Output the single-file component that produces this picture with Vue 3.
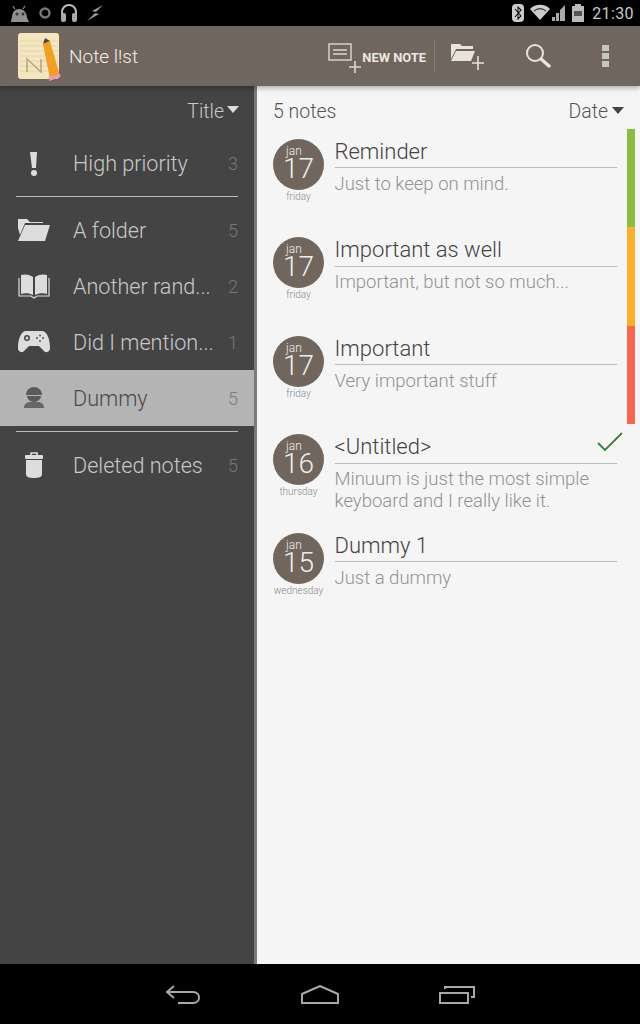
<script setup>
const cats = [
  { name: 'A folder', count: 5, icon: 'folder' },
  { name: 'Another rand...', count: 2, icon: 'book' },
  { name: 'Did I mention...', count: 1, icon: 'game' },
  { name: 'Dummy', count: 5, icon: 'user', active: true },
]
const notes = [
  { m: 'jan', d: 17, w: 'friday', t: 'Reminder', b: ['Just to keep on mind.'], c: '#8bbd45' },
  { m: 'jan', d: 17, w: 'friday', t: 'Important as well', b: ['Important, but not so much...'], c: '#fbb02d' },
  { m: 'jan', d: 17, w: 'friday', t: 'Important', b: ['Very important stuff'], c: '#f7664f' },
  { m: 'jan', d: 16, w: 'thursday', t: '<Untitled>', b: ['Minuum is just the most simple', 'keyboard and I really like it.'], check: true },
  { m: 'jan', d: 15, w: 'wednesday', t: 'Dummy 1', b: ['Just a dummy'] },
]
</script>

<template>
  <div class="screen">
    <header class="status">
      <div class="status-left">
        <svg width="22" height="20" viewBox="0 0 22 20"><path d="M3 15c0-6 3-9 7-9s8 3 8 9c1 2 2 3 2 4H2c0-1 0-3 1-4z" fill="#8f8f8f"/><path d="M6 6 4 3M14 6l2-3" stroke="#8f8f8f" stroke-width="1.2"/><circle cx="8" cy="11" r="1.5" fill="#333"/><circle cx="14" cy="11" r="1.5" fill="#333"/></svg>
        <svg width="14" height="14" viewBox="0 0 14 14"><circle cx="7" cy="7" r="4.5" fill="none" stroke="#777" stroke-width="2.4"/></svg>
        <svg width="20" height="20" viewBox="0 0 20 20"><path d="M3 12V9a7 7 0 0 1 14 0v3" fill="none" stroke="#bbb" stroke-width="2"/><rect x="2" y="10" width="5" height="9" rx="2" fill="#aaa"/><rect x="13" y="10" width="5" height="9" rx="2" fill="#aaa"/></svg>
        <svg width="18" height="18" viewBox="0 0 18 18"><path d="M17 1 6 7l4 1-9 9 12-7-4-1z" fill="#999"/></svg>
      </div>
      <div class="status-right">
        <svg width="12" height="18" viewBox="0 0 12 18"><rect width="12" height="18" rx="4" fill="#ccc"/><path d="m3 5 6 7-3 3V3l3 3-6 7" fill="none" stroke="#111" stroke-width="1.1"/></svg>
        <svg width="36" height="18" viewBox="0 0 36 18"><path d="M0 5a14 14 0 0 1 20 0l-10 11z" fill="#ccc"/><path d="M4 7a9 9 0 0 1 12 0" fill="none" stroke="#111"/><path d="M22 17h3v-4h-3zM26 17h3V9h-3zM30 17h5V1l-5 5z" fill="#aaa"/></svg>
        <svg class="battery" width="12" height="18" viewBox="0 0 12 18"><path d="M3 0h6v2h3v16H0V2h3z" fill="#bbb"/><rect x="2" y="7" width="8" height="5" fill="#555"/></svg>
        <span class="clock">21:30</span>
      </div>
    </header>

    <div class="appbar">
      <svg class="logo" width="44" height="50" viewBox="0 0 44 50">
        <rect x="0" y="1" width="41" height="46" rx="3" fill="#f4e7c0"/>
        <path d="M2 9h38M2 14h38M2 19h38M2 24h38M2 29h38M2 34h38M2 39h38" stroke="#dfd0a8" stroke-width=".8"/>
        <path d="M9 40V27l14 13V27" fill="none" stroke="#b8a684" stroke-width="1.6"/>
        <path d="m25 12 7-3 10 35-10 3z" fill="#f1a025"/><path d="m25 12 2-6 5 3z" fill="#5a4630"/><path d="m30.500 45 11.500-3 .5 3-11 4z" fill="#ec9ab0"/>
      </svg>
      <span class="app-title">Note l!st</span>
      <div class="actions">
        <button class="new-note">
          <svg width="34" height="30" viewBox="0 0 34 30"><rect x="1" y="1" width="22" height="16" fill="none" stroke="#ddd8d2" stroke-width="1.4"/><path d="M5 7h14M5 11h14" stroke="#ddd8d2" stroke-width="1.4"/><path d="M27 18v12M21 24h12" stroke="#ddd8d2" stroke-width="1.6"/></svg>
          <span>NEW NOTE</span>
        </button>
        <i class="sep"></i>
        <svg class="act-folder" width="34" height="28" viewBox="0 0 34 28"><path d="M0 16V1h9l2 2h11v3H5zM0 18l5-10h19l-4 10z" fill="#e8e3dd"/><path d="M27 13v14M21 20h12" stroke="#e8e3dd" stroke-width="1.6" fill="none"/></svg>
        <svg class="act-search" width="26" height="26" viewBox="0 0 26 26"><circle cx="10" cy="10" r="8" fill="none" stroke="#e8e3dd" stroke-width="2"/><path d="m16 16 8 7" stroke="#e8e3dd" stroke-width="3.4" stroke-linecap="round"/></svg>
        <div class="dots"><i></i><i></i><i></i></div>
      </div>
    </div>

    <div class="body">
      <aside class="sidebar">
        <div class="side-head">Title<i class="tri light"></i></div>
        <div class="row first">
          <div class="ic"><svg width="10" height="24" viewBox="0 0 10 24"><path d="M1 0h7L7 16H3z" fill="#ddd"/><circle cx="5" cy="21" r="3" fill="#ddd"/></svg></div>
          <span class="label">High priority</span><span class="count">3</span>
        </div>
        <hr class="rule top-rule" />
        <div class="row" v-for="c in cats" :key="c.name" :class="{ active: c.active }">
          <div class="ic">
            <svg v-if="c.icon === 'folder'" width="32" height="24" viewBox="0 0 32 24"><path d="M0 10V1h9l3 3h13v1H7L2 17z" fill="#ddd"/><path d="M0 23 7 7h25l-5 16z" fill="#ddd"/></svg>
            <svg v-else-if="c.icon === 'book'" width="32" height="26" viewBox="0 0 32 26"><path d="M15 4C11 1 6 1 3 2v19c4-1 8-1 12 1zM17 4c4-3 9-3 12-2v19c-4-1-8-1-12 1z" fill="#ddd"/><path d="M1 5v18h12l3 2 3-2h12V5" fill="none" stroke="#ddd" stroke-width="1.2"/></svg>
            <svg v-else-if="c.icon === 'game'" width="32" height="22" viewBox="0 0 32 22"><path d="M8 0h16c5 0 8 8 8 17 0 4-4 6-7 2l-4-4H11l-4 4c-3 4-7 2-7-2C0 8 3 0 8 0z" fill="#ddd"/><circle cx="9" cy="7" r="3" fill="#444"/><circle cx="9" cy="7" r="1.500" fill="#ddd"/><circle cx="22" cy="4.500" r="1" fill="#555"/><circle cx="22" cy="10" r="1" fill="#555"/><circle cx="19" cy="7" r="1" fill="#555"/><circle cx="25" cy="7" r="1" fill="#555"/></svg>
            <svg v-else width="22" height="22" viewBox="0 0 22 22"><path d="M3 8a8 8 0 0 1 16 0z" fill="#5a5a5a"/><path d="M4 9h14a7 6 0 0 1-14 0z" fill="#5a5a5a"/><path d="M1 21c0-4 3-6 6-6h8c3 0 6 2 6 6z" fill="#666"/></svg>
          </div>
          <span class="label">{{ c.name }}</span><span class="count">{{ c.count }}</span>
        </div>
        <hr class="rule bottom-rule" />
        <div class="row">
          <div class="ic"><svg width="18" height="26" viewBox="0 0 18 26"><path d="M6 3V1h6v2" fill="none" stroke="#ddd" stroke-width="1.6"/><rect y="3" width="18" height="4" rx="1" fill="#ddd"/><path d="M1 8h16v14c0 3-3 4-8 4s-8-1-8-4z" fill="#ddd"/></svg></div>
          <span class="label">Deleted notes</span><span class="count">5</span>
        </div>
      </aside>

      <main class="main">
        <div class="main-head"><span>5 notes</span><span class="sort">Date<i class="tri dark"></i></span></div>
        <article class="note" v-for="n in notes" :key="n.t">
          <div class="date">
            <div class="circle"><span class="mon">{{ n.m }}</span><span class="day">{{ n.d }}</span></div>
            <span class="week">{{ n.w }}</span>
          </div>
          <div class="content">
            <div class="title">{{ n.t }}
              <svg v-if="n.check" class="check" width="26" height="20" viewBox="0 0 26 20"><path d="m1 11 7 7L25 1" fill="none" stroke="#3f7d3a" stroke-width="1.8"/></svg>
            </div>
            <p class="text" v-for="line in n.b" :key="line">{{ line }}</p>
          </div>
          <div class="stripe" :style="{ background: n.c || 'transparent' }"></div>
        </article>
      </main>
    </div>

    <footer class="navbar">
      <svg width="36" height="20" viewBox="0 0 36 20"><path d="M9 1 2 7l7 6M2 7h26c8 0 8 11 0 11H13" fill="none" stroke="#a8a8a8" stroke-width="2"/></svg>
      <svg width="38" height="20" viewBox="0 0 38 20"><path d="M1 18V9L19 1l18 8v9z" fill="none" stroke="#a8a8a8" stroke-width="2"/></svg>
      <svg width="36" height="20" viewBox="0 0 36 20"><rect x="1" y="8" width="28" height="10" fill="none" stroke="#a8a8a8" stroke-width="2"/><path d="M6 4V2h29v10h-3" fill="none" stroke="#a8a8a8" stroke-width="2"/></svg>
    </footer>
  </div>
</template>

<style>
html, body { margin: 0; background: #000; }
</style>

<style scoped>
.screen { width: 640px; height: 1024px; display: flex; flex-direction: column; font-family: Roboto, "Liberation Sans", sans-serif; font-weight: 300; overflow: hidden; }
.status { height: 26px; background: #000; display: flex; justify-content: space-between; align-items: center; padding: 0 6px 0 9px; flex: none; }
.status-left, .status-right { display: flex; align-items: center; }
.status-left { gap: 7px; }
.status-right { gap: 6px; }
.clock { color: #c8c8c8; font-size: 16px; font-weight: 400; letter-spacing: .4px; margin-left: 2px; }
.appbar { height: 60px; background: #70665e; display: flex; align-items: center; padding-left: 18px; flex: none; box-shadow: 0 2px 5px rgba(0,0,0,.3); position: relative; }
.logo { flex: none; margin-top: 2px; }
.app-title { color: #f0eeeb; font-size: 19px; margin-left: 7px; }
.actions { margin-left: auto; display: flex; align-items: center; }
.new-note { display: flex; align-items: center; background: none; border: 0; padding: 0; color: #ebe7e2; font: 700 12.900px Roboto, sans-serif; gap: 0; margin-right: 8px; }
.new-note svg { margin-top: 4px; }
.new-note span { margin-top: 2px; }
.sep { width: 1px; height: 34px; background: #867c74; }
.act-folder { margin: 2px 0 0 16px; }
.act-search { margin: 0 0 0 40px; }
.dots { margin: 0 31px 0 51px; display: flex; flex-direction: column; gap: 2px; }
.dots i { width: 7px; height: 6px; background: #c9c4be; display: block; }

.body { flex: 1; display: flex; min-height: 0; }
.sidebar { width: 254px; background: #444; border-right: 3px solid #7a7a78; flex: none; color: #d9d9d9; }
.side-head { height: 50px; padding-right: 15px; display: flex; justify-content: flex-end; align-items: center; font-size: 19.500px; color: #c8c8c8; }
.row { height: 56px; display: flex; align-items: center; padding-right: 16px; }
.first { height: 55px; }
.ic { width: 68px; flex: none; display: flex; justify-content: center; padding-right: 1px; box-sizing: border-box; }
.label { font-size: 21.600px; color: #c9c9c9; flex: 1; margin-left: 5px; white-space: nowrap; }
.count { font-size: 18px; color: #777; }
.active { background: #b4b4b4; }
.active .label { color: #4a4a4a; }
.active .count { color: #7d7d7d; }
.rule { border: 0; height: 1px; background: #bbb; margin: 0 16px; }
.top-rule { margin-top: 5px; margin-bottom: 5px; }
.bottom-rule { margin-top: 5px; margin-bottom: 5px; }
.tri { display: inline-block; width: 0; height: 0; border-left: 6.500px solid transparent; border-right: 6.500px solid transparent; margin-left: 3px; margin-bottom: 4px; }
.tri.light { border-top: 7px solid #ddd; }
.tri.dark { border-top: 7px solid #444; margin-left: 4px; }

.main { flex: 1; background: #f5f5f5; color: #444; }
.main-head { height: 43px; box-sizing: border-box; padding: 8px 16px 0 16px; display: flex; justify-content: space-between; align-items: center; font-size: 19.500px; color: #555; }
.note { height: 98.400px; display: flex; position: relative; box-sizing: border-box; padding-left: 16px; }
.date { width: 51px; flex: none; display: flex; flex-direction: column; align-items: center; padding-top: 10px; }
.circle { width: 51px; height: 51px; border-radius: 50%; background: #70665e; display: flex; flex-direction: column; align-items: center; color: #efedea; flex: none; }
.mon { font-size: 12px; line-height: 14px; margin-top: 5px; margin-right: 9px; }
.day { font-size: 28px; line-height: 21px; }
.week { font-size: 10px; line-height: 13px; color: #8a8a8a; white-space: nowrap; }
.content { margin-left: 10.500px; width: 282.500px; }
.title { position: relative; height: 39.400px; box-sizing: border-box; border-bottom: 1px solid #bdbdbd; font-size: 22px; line-height: 29px; padding-top: 8px; color: #444; }
.check { position: absolute; right: -6px; top: 8px; }
.text { margin: 0; font-size: 18.500px; line-height: 22px; color: #929292; }
.title + .text { margin-top: 4.600px; }
.stripe { position: absolute; right: 5px; top: 0; width: 8px; height: 100%; }
.navbar { height: 60px; background: #000; flex: none; display: flex; align-items: center; justify-content: center; gap: 100px; padding-top: 2px; box-sizing: border-box; }
</style>
